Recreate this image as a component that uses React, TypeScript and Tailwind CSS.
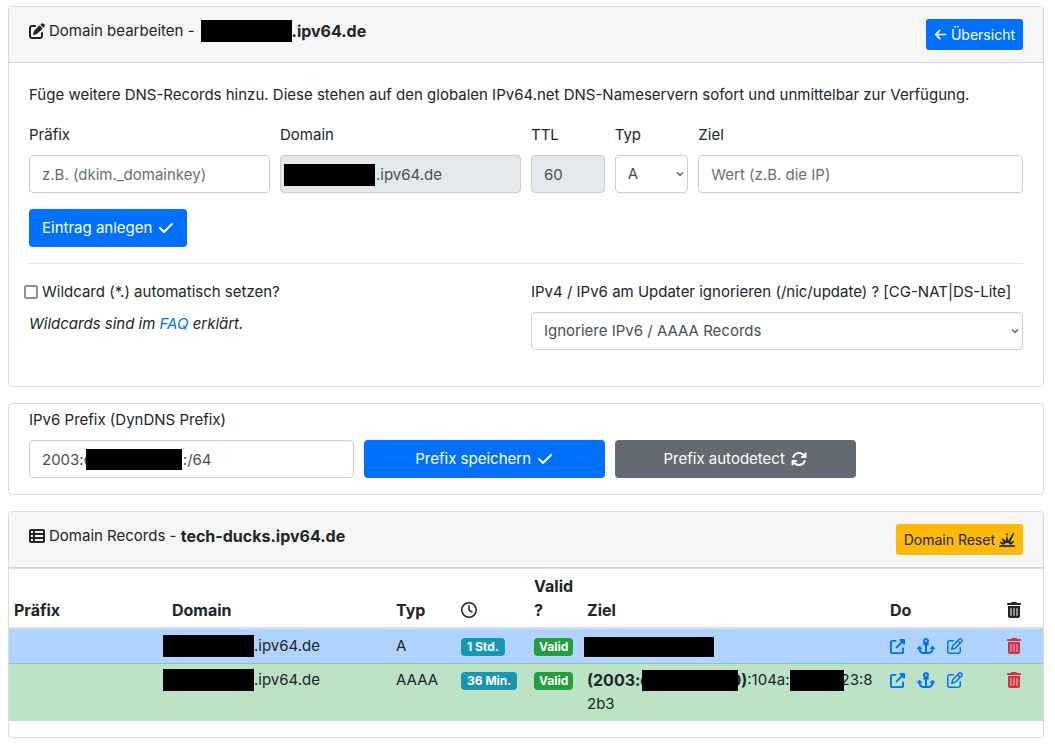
import React, { useState } from 'react';
import {
  FaAnchor,
  FaArrowLeft,
  FaArrowsRotate,
  FaCheck,
  FaExplosion,
  FaPenToSquare,
  FaRegClock,
  FaRegPenToSquare,
  FaTableList,
  FaTrashCan,
  FaUpRightFromSquare,
} from 'react-icons/fa6';

interface DnsRecord {
  type: string;
  age: string;
  rowClass: string;
  target: React.ReactNode;
}

const inputClass =
  'block h-[38px] w-full rounded border border-[#c7ced6] bg-white px-3 text-[#484f56] placeholder-[#666f78] outline-none focus:border-[#80bdff]';

// Blank run inside a value, the bar is laid over it
const BLANK = '\u2003\u2003\u2003\u2003\u2003\u2003';

const Bar: React.FC<{ className: string }> = ({ className }) => (
  <span className={`inline-block bg-black align-middle ${className}`} />
);

const Card: React.FC<{ children: React.ReactNode }> = ({ children }) => (
  <section className="mb-4 rounded border border-[#dadbdc] bg-white">{children}</section>
);

const CardHeader: React.FC<{ children: React.ReactNode }> = ({ children }) => (
  <div className="flex items-start justify-between rounded-t border-b border-[#d4d5d6] bg-[#f6f6f6] px-5 py-3">
    {children}
  </div>
);

interface SelectProps {
  id: string;
  value: string;
  options: string[];
  onChange: (value: string) => void;
}

const Select: React.FC<SelectProps> = ({ id, value, options, onChange }) => (
  <div className="relative">
    <select
      id={id}
      value={value}
      onChange={(e) => onChange(e.target.value)}
      className={`${inputClass} appearance-none`}
    >
      {options.map((o) => (
        <option key={o}>{o}</option>
      ))}
    </select>
    <svg className="pointer-events-none absolute right-1 top-[15px] h-2 w-2" viewBox="0 0 8 8" fill="none">
      <path d="M1 2.5l3 3 3-3" stroke="#484f56" strokeWidth="1.2" />
    </svg>
  </div>
);

const records: DnsRecord[] = [
  {
    type: 'A',
    age: '1 Std.',
    rowClass: 'bg-[#b0d4ff] *:border-transparent',
    target: <Bar className="-ml-[3px] h-5 w-[130px]" />,
  },
  {
    type: 'AAAA',
    age: '36 Min.',
    rowClass: 'bg-[#bce3c5] *:border-[#86cc96]',
    target: (
      <>
        <div className="flex h-6 items-center">
          <b className="text-[16px]">(2003:d</b>
          <Bar className="relative -mr-2 -ml-2 h-[21px] w-24" />
          <b className="text-[16px]">0)</b>:104a:
          <Bar className="relative -mr-[3px] h-[21px] w-[54px]" />
          23:8
        </div>
        2b3
      </>
    ),
  },
];

export default function App() {
  const [type, setType] = useState('A');
  const [ignore, setIgnore] = useState('Ignoriere IPv6 / AAAA Records');
  const [wildcard, setWildcard] = useState(false);

  return (
    <main className="pt-[6px] pr-[11px] pl-2 font-['Inter',sans-serif] text-[15px] leading-6 text-[#212529]">
      <Card>
        <CardHeader>
          <h1 className="flex items-center">
            <FaPenToSquare className="mr-1 size-4" />
            Domain bearbeiten -
            <Bar className="ml-[6px] h-[22px] w-[91px]" />
            <b className="text-[16px]">.ipv64.de</b>
          </h1>
          <a
            href="#uebersicht"
            className="flex h-[31px] items-center gap-1 rounded-[3px] bg-[#0071ff] px-2 text-[14px] text-white"
          >
            <FaArrowLeft className="size-[13px]" />
            Übersicht
          </a>
        </CardHeader>

        <div className="p-5 pb-9">
          <p className="mb-4">
            Füge weitere DNS-Records hinzu. Diese stehen auf den globalen IPv64.net DNS-Nameservern sofort und
            unmittelbar zur Verfügung.
          </p>
          <form onSubmit={(e) => e.preventDefault()}>
            <div className="mb-4 grid grid-cols-12 gap-x-[10px]">
              <div className="col-span-3">
                <label htmlFor="prefix" className="mb-2 block">Präfix</label>
                <input id="prefix" placeholder="z.B. (dkim._domainkey)" className={inputClass} />
              </div>
              <div className="col-span-3">
                <label htmlFor="domain" className="mb-2 block">Domain</label>
                <div className="relative">
                  <input
                    id="domain"
                    readOnly
                    value=".ipv64.de"
                    className="block h-[38px] w-full rounded border border-[#c7ced6] bg-[#e5e9ec] pr-3 pl-[95px] text-[#484f56] outline-none"
                  />
                  <Bar className="absolute top-[9px] left-1 h-[22px] w-[91px]" />
                </div>
              </div>
              <div>
                <label htmlFor="ttl" className="mb-2 block">TTL</label>
                <input
                  id="ttl"
                  readOnly
                  value="60"
                  className="block h-[38px] w-full rounded border border-[#c7ced6] bg-[#e5e9ec] px-3 text-[#484f56] outline-none"
                />
              </div>
              <div>
                <label htmlFor="type" className="mb-2 block">Typ</label>
                <Select id="type" value={type} onChange={setType} options={['A', 'AAAA', 'CNAME', 'MX', 'TXT']} />
              </div>
              <div className="col-span-4">
                <label htmlFor="target" className="mb-2 block">Ziel</label>
                <input id="target" placeholder="Wert (z.B. die IP)" className={inputClass} />
              </div>
            </div>
            <button type="submit" className="flex h-[38px] items-center gap-[6px] rounded bg-[#0071ff] px-[13px] text-white">
              Eintrag anlegen
              <FaCheck className="size-4" />
            </button>
          </form>

          <hr className="my-4 border-[#e0e1e2]" />

          <div className="grid grid-cols-2 gap-x-[10px]">
            <div>
              <label className="-ml-[5px] mb-2 flex items-center gap-1">
                <input
                  type="checkbox"
                  checked={wildcard}
                  onChange={(e) => setWildcard(e.target.checked)}
                  className="size-[14px] appearance-none rounded-[2px] border-2 border-[#8f8f9d] bg-white checked:bg-[#0071ff]"
                />
                Wildcard (*.) automatisch setzen?
              </label>
              <p className="italic">
                Wildcards sind im <a href="#faq" className="text-[#0071ff]">FAQ</a> erklärt.
              </p>
            </div>
            <div>
              <label htmlFor="ignore" className="mb-2 block whitespace-nowrap">
                IPv4 / IPv6 am Updater ignorieren (/nic/update) ? [CG-NAT|DS-Lite]
              </label>
              <Select
                id="ignore"
                value={ignore}
                onChange={setIgnore}
                options={['Ignoriere IPv6 / AAAA Records', 'Ignoriere IPv4 / A Records']}
              />
            </div>
          </div>
        </div>
      </Card>

      <Card>
        <div className="px-5 pt-1 pb-4">
          <label htmlFor="dyn-prefix" className="mb-2 block">IPv6 Prefix (DynDNS Prefix)</label>
          <div className="grid grid-cols-12 gap-x-[10px]">
            <div className="relative col-span-4">
              <input id="dyn-prefix" defaultValue={`2003:d${BLANK}:/64`} className={inputClass} />
              <Bar className="pointer-events-none absolute top-[9px] left-[57px] h-[21px] w-24" />
            </div>
            <button type="button" className="col-span-3 flex h-[38px] items-center justify-center gap-[6px] rounded bg-[#0071ff] text-white">
              Prefix speichern
              <FaCheck className="size-4" />
            </button>
            <button type="button" className="col-span-3 flex h-[38px] items-center justify-center gap-[6px] rounded bg-[#636a72] text-white">
              Prefix autodetect
              <FaArrowsRotate className="size-4" />
            </button>
          </div>
        </div>
      </Card>

      <Card>
        <CardHeader>
          <h2 className="flex items-center">
            <FaTableList className="mr-1 size-4" />
            Domain Records -&nbsp;<b className="text-[16px]">tech-ducks.ipv64.de</b>
          </h2>
          <button
            type="button"
            className="flex h-[31px] items-center gap-1 rounded-[3px] bg-[#ffb90a] px-2 text-[14px]"
          >
            Domain Reset
            <FaExplosion className="size-4" />
          </button>
        </CardHeader>

        <table className="mb-4 w-full table-fixed border-separate border-spacing-0 text-left">
          <colgroup>
            <col className="w-[158px]" />
            <col className="w-[224px]" />
            <col className="w-[65px]" />
            <col className="w-[73px]" />
            <col className="w-[53px]" />
            <col />
            <col className="w-[116px]" />
            <col className="w-[42px]" />
          </colgroup>
          <thead className="text-[16px]">
            <tr className="*:border-t *:border-b-2 *:border-[#dadee1] *:px-[5px] *:py-[5px] *:align-bottom">
              <th>Präfix</th>
              <th>Domain</th>
              <th>Typ</th>
              <th><FaRegClock className="my-1 size-4" aria-label="Zeit" /></th>
              <th>Valid ?</th>
              <th>Ziel</th>
              <th>Do</th>
              <th><FaTrashCan className="my-1 size-4" aria-label="Löschen" /></th>
            </tr>
          </thead>
          <tbody>
            {records.map((r) => (
              <tr key={r.type} className={`${r.rowClass} *:border-t *:px-[5px] *:pt-1 *:pb-[5px] *:align-top`}>
                <td />
                <td>
                  <div className="-ml-[9px] flex items-center">
                    <Bar className="h-[22px] w-[91px]" />
                    .ipv64.de
                  </div>
                </td>
                <td>{r.type}</td>
                <td>
                  <span className="mt-1 block h-[18px] w-fit rounded bg-[#1997b0] px-[6px] text-[12px] leading-[18px] font-bold whitespace-nowrap text-white">
                    {r.age}
                  </span>
                </td>
                <td>
                  <span className="mt-1 block h-[18px] w-fit rounded bg-[#239e3e] px-[5px] text-[12px] leading-[18px] font-bold text-white">
                    Valid
                  </span>
                </td>
                <td className="whitespace-nowrap">{r.target}</td>
                <td>
                  <div className="flex h-6 items-center gap-3 text-[#0071ff]">
                    <a href="#open" aria-label="Öffnen"><FaUpRightFromSquare className="size-[15px]" /></a>
                    <a href="#anchor" aria-label="Anker"><FaAnchor className="h-4 w-[18px]" /></a>
                    <a href="#edit" aria-label="Bearbeiten"><FaRegPenToSquare className="size-4" /></a>
                  </div>
                </td>
                <td>
                  <button type="button" aria-label="Eintrag löschen" className="flex h-6 items-center text-[#d9303e]">
                    <FaTrashCan className="size-4" />
                  </button>
                </td>
              </tr>
            ))}
          </tbody>
        </table>
      </Card>
    </main>
  );
}
